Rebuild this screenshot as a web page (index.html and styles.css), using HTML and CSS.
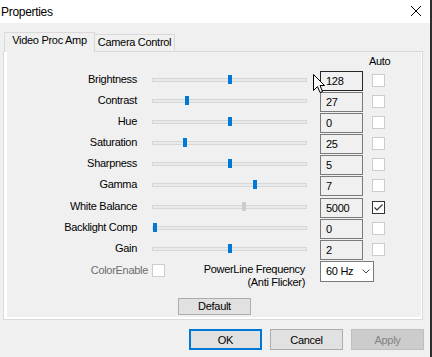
FILE: index.html
```html
<!DOCTYPE html>
<html lang="en">
<head>
    <meta charset="UTF-8">
    <meta name="viewport" content="width=device-width, initial-scale=1.0">
    <title>Properties</title>
    <link rel="stylesheet" href="styles.css">
</head>
<body>
    <div class="window">
        <div class="titlebar">
            <span class="title">Properties</span>
            <svg class="close" width="10" height="10" viewBox="0 0 10 10"><path d="M0 0L10 10M10 0L0 10" stroke="#000" stroke-width="1"/></svg>
        </div>
        <div class="content">
            <div class="tabs">
                <div class="tab active">Video Proc Amp</div>
                <div class="tab">Camera Control</div>
            </div>
            <div class="panel">
                <div class="page">
                    <div class="autoHead">Auto</div>
                    <div class="grid">
                        <span class="name">Brightness</span>
                        <div class="slider"><span class="thumb" style="left:75px"></span></div>
                        <div class="value hover">128</div>
                        <span class="check"></span>

                        <span class="name">Contrast</span>
                        <div class="slider"><span class="thumb" style="left:32px"></span></div>
                        <div class="value">27</div>
                        <span class="check"></span>

                        <span class="name">Hue</span>
                        <div class="slider"><span class="thumb" style="left:75px"></span></div>
                        <div class="value">0</div>
                        <span class="check"></span>

                        <span class="name">Saturation</span>
                        <div class="slider"><span class="thumb" style="left:30px"></span></div>
                        <div class="value">25</div>
                        <span class="check"></span>

                        <span class="name">Sharpness</span>
                        <div class="slider"><span class="thumb" style="left:75px"></span></div>
                        <div class="value">5</div>
                        <span class="check"></span>

                        <span class="name">Gamma</span>
                        <div class="slider"><span class="thumb" style="left:100px"></span></div>
                        <div class="value">7</div>
                        <span class="check"></span>

                        <span class="name">White Balance</span>
                        <div class="slider"><span class="thumb off" style="left:89px"></span></div>
                        <div class="value">5000</div>
                        <span class="check on"><svg width="11" height="11" viewBox="0 0 11 11"><path d="M1.5 5.5L4 8L9.5 2.5" fill="none" stroke="#333" stroke-width="1.2"/></svg></span>

                        <span class="name">Backlight Comp</span>
                        <div class="slider"><span class="thumb" style="left:0px"></span></div>
                        <div class="value">0</div>
                        <span class="check"></span>

                        <span class="name">Gain</span>
                        <div class="slider"><span class="thumb" style="left:75px"></span></div>
                        <div class="value">2</div>
                        <span class="check"></span>
                    </div>
                    <div class="extraRow">
                        <div class="colorGroup">
                            <span class="dim">ColorEnable</span>
                            <span class="check"></span>
                        </div>
                        <div class="freq">PowerLine Frequency<br>(Anti Flicker)</div>
                        <div class="select">
                            <span>60 Hz</span>
                            <svg class="chev" width="8" height="5" viewBox="0 0 8 5"><path d="M0.5 0.5L4 4L7.5 0.5" fill="none" stroke="#444" stroke-width="1"/></svg>
                        </div>
                    </div>
                    <div class="defaultRow">
                        <button class="btn small">Default</button>
                    </div>
                </div>
            </div>
            <div class="buttons">
                <button class="btn ok">OK</button>
                <button class="btn">Cancel</button>
                <button class="btn disabled">Apply</button>
            </div>
        </div>
        <svg class="cursor" width="12" height="19" viewBox="0 0 12 19"><path d="M0.5 0.5V16.5L4.5 12.5L7 18.5L9.5 17.5L7 11.5H11.5Z" fill="#fff" stroke="#000" stroke-width="1"/></svg>
    </div>
</body>
</html>
```

FILE: styles.css
```css
body{
    margin:0;
    background:#2e2e2e;
    font-family:"Liberation Sans", Arial, sans-serif;
    font-size:11px;
    letter-spacing:-0.3px;
    color:#000;
}
.window{
    position:relative;
    width:430px;
    height:357px;
    background:#f0f0f0;
}
.titlebar{
    height:23px;
    background:#fff;
    display:flex;
    align-items:center;
}
.title{
    font-size:12px;
    padding-left:1px;
}
.close{
    margin-left:auto;
    margin-right:9px;
    align-self:flex-start;
    margin-top:6px;
}
.content{
    padding:9px 7px 0 3px;
}
.tabs{
    display:flex;
    align-items:flex-end;
    height:19px;
    margin-left:1px;
}
.tab{
    box-sizing:border-box;
    height:17px;
    width:81px;
    margin-left:-1px;
    border:1px solid #d9d9d9;
    border-bottom:none;
    padding-top:1px;
    line-height:13px;
    text-align:center;
    background:#f0f0f0;
}
.tab.active{
    position:relative;
    z-index:1;
    height:20px;
    width:91px;
    margin-left:0;
    margin-bottom:-1px;
}
.panel{
    box-sizing:border-box;
    height:269px;
    border:1px solid #d9d9d9;
    background:#fff;
    padding:0 1px 2px 3px;
}
.page{
    height:100%;
    background:#f0f0f0;
}
.autoHead{
    box-sizing:border-box;
    height:19px;
    padding:3px 0 0 362px;
    line-height:13px;
}
.grid{
    display:grid;
    grid-template-columns:130px 183px 49px 23px;
    grid-auto-rows:21.1px;
    align-items:start;
}
.name{
    text-align:right;
    line-height:13px;
    margin-top:2px;
    white-space:nowrap;
}
.slider{
    position:relative;
    box-sizing:border-box;
    margin:7px 0 0 15px;
    width:155px;
    height:4px;
    border:1px solid #d6d6d6;
    background:#e7eaea;
}
.thumb{
    position:absolute;
    top:-4px;
    width:4px;
    height:9px;
    background:#0078d7;
}
.thumb.off{
    background:#cccccc;
}
.value{
    box-sizing:border-box;
    width:43px;
    height:20px;
    border:1px solid #7a7a7a;
    background:#f0f0f0;
    padding-left:5px;
    line-height:18px;
}
.value.hover{
    border-color:#262626;
}
.check{
    box-sizing:border-box;
    display:flex;
    align-items:center;
    justify-content:center;
    width:13px;
    height:13px;
    margin:3px 0 0 3px;
    border:1px solid #cccccc;
    background:#fff;
}
.check.on{
    border-color:#333;
}
.extraRow{
    display:flex;
    align-items:flex-start;
    height:31px;
}
.colorGroup{
    width:158px;
    display:flex;
    justify-content:flex-end;
    align-items:flex-start;
    gap:4px;
}
.colorGroup .check{
    margin:3px 0 0 0;
}
.dim{
    color:#6d6d6d;
    line-height:13px;
    margin-top:3px;
}
.freq{
    width:140px;
    text-align:right;
    line-height:13px;
    padding-top:2px;
}
.select{
    box-sizing:border-box;
    margin-left:15px;
    width:54px;
    height:21px;
    border:1px solid #7a7a7a;
    background:#fff;
    display:flex;
    align-items:center;
    padding-left:5px;
}
.chev{
    margin-left:auto;
    margin-right:3px;
}
.defaultRow{
    margin-top:6px;
    padding-left:171px;
}
.btn{
    box-sizing:border-box;
    width:73px;
    height:21px;
    padding:0;
    font-family:inherit;
    font-size:11px;
    letter-spacing:-0.3px;
    color:#000;
    background:#e1e1e1;
    border:1px solid #adadad;
}
.btn.small{
    height:17px;
}
.btn.ok{
    border:2px solid #0078d7;
}
.btn.disabled{
    background:#cccccc;
    border-color:#bfbfbf;
    color:#838383;
}
.buttons{
    display:flex;
    justify-content:flex-end;
    gap:8px;
    margin:9px -1px 0 0;
}
.cursor{
    position:absolute;
    left:313px;
    top:74px;
}
```
